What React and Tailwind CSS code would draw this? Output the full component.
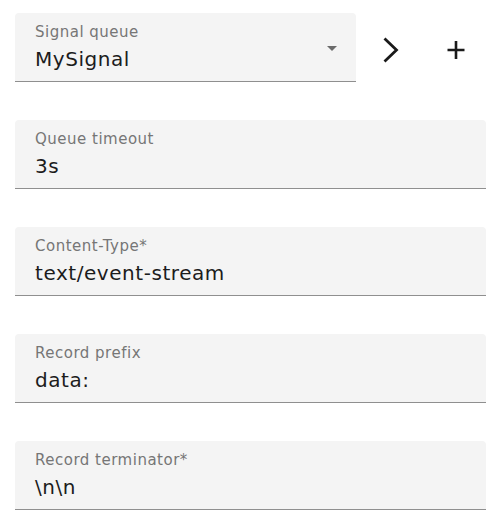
import React from 'react'

const font = { fontFamily: '"DejaVu Sans", "Liberation Sans", sans-serif' }

function Field({ label, value, select = false, className = '' }) {
  return (
    <div
      className={`flex h-[69px] rounded-t-[4px] border-b border-[#8f8f8f] bg-[#f4f4f4] pl-5 ${className}`}
    >
      <div className="flex min-w-0 flex-1 flex-col pt-[10px]">
        <label className="text-[15px] leading-[18px] tracking-[0.5px] text-[#767676]">{label}</label>
        <div className="mt-[6px] text-[20px] leading-[24px] tracking-[0.55px] text-[#1c1c1c]">
          {value}
        </div>
      </div>
      {select && (
        <div className="flex items-center pr-[19px] pt-[3px]">
          <svg width="10" height="5" viewBox="0 0 10 5">
            <path d="M0 0 L5 5 L10 0 Z" fill="#6b6b6b" />
          </svg>
        </div>
      )}
    </div>
  )
}

export default function App() {
  return (
    <div className="min-h-screen bg-white pl-[15px] pr-[13px] pt-[13px]" style={font}>
      <div className="flex flex-col gap-[38px]">
        <div className="flex">
          <Field label="Signal queue" value="MySignal" select className="w-[341px]" />
          <button className="ml-[11px] mt-[13px] flex h-[48px] w-[48px] items-center justify-center">
            <svg width="16" height="26" viewBox="0 0 16 26">
              <polyline
                points="1.5,1.5 13.5,13 1.5,24.5"
                fill="none"
                stroke="#1a1a1a"
                strokeWidth="2.8"
              />
            </svg>
          </button>
          <button className="ml-[17px] mt-[13px] flex h-[48px] w-[48px] items-center justify-center">
            <svg width="20" height="20" viewBox="0 0 20 20">
              <path d="M10 1 V19 M1.5 10 H18.5" fill="none" stroke="#1a1a1a" strokeWidth="2.6" />
            </svg>
          </button>
        </div>
        <Field label="Queue timeout" value="3s" />
        <Field label="Content-Type*" value="text/event-stream" />
        <Field label="Record prefix" value="data:" />
        <Field label="Record terminator*" value="\n\n" />
      </div>
    </div>
  )
}
